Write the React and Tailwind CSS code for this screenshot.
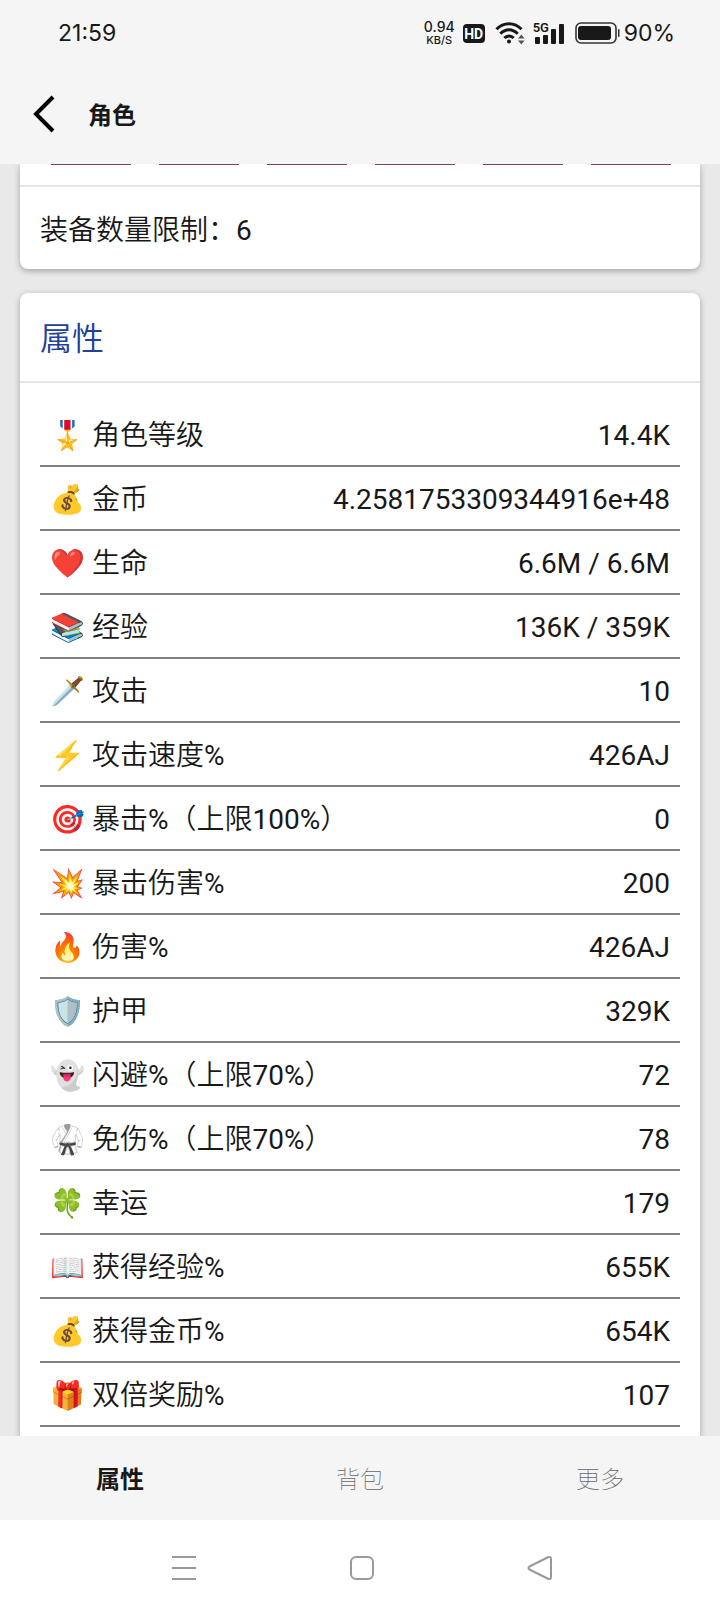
import React, { useState } from 'react';

const slots = [1, 2, 3, 4, 5, 6];

const stats = [
  { icon: '🎖️', label: '角色等级', value: '14.4K' },
  { icon: '💰', label: '金币', value: '4.2581753309344916e+48' },
  { icon: '❤️', label: '生命', value: '6.6M / 6.6M' },
  { icon: '📚', label: '经验', value: '136K / 359K' },
  { icon: '🗡️', label: '攻击', value: '10' },
  { icon: '⚡', label: '攻击速度%', value: '426AJ' },
  { icon: '🎯', label: '暴击%（上限100%）', value: '0' },
  { icon: '💥', label: '暴击伤害%', value: '200' },
  { icon: '🔥', label: '伤害%', value: '426AJ' },
  { icon: '🛡️', label: '护甲', value: '329K' },
  { icon: '👻', label: '闪避%（上限70%）', value: '72' },
  { icon: '🥋', label: '免伤%（上限70%）', value: '78' },
  { icon: '🍀', label: '幸运', value: '179' },
  { icon: '📖', label: '获得经验%', value: '655K' },
  { icon: '💰', label: '获得金币%', value: '654K' },
  { icon: '🎁', label: '双倍奖励%', value: '107' },
];

const tabs = ['属性', '背包', '更多'];

const WifiIcon = () => (
  <svg width="30" height="24" viewBox="0 0 30 24" fill="none" stroke="#181818" strokeWidth="3">
    <path d="M1.5 8.2C8.5 .8 19.5 .8 26.5 8.2" />
    <path d="M5.3 12.8C10.5 7.3 17.5 7.3 22.7 12.8" />
    <path d="M9.3 17C12 14.2 16 14.2 18.7 17" />
    <circle cx="14" cy="20.6" r="2" fill="#181818" stroke="none" />
    <path d="M23 17.5L26.3 13.5L29.6 17.5ZM23 19.5L26.3 23.5L29.6 19.5Z" fill="#555" stroke="none" />
  </svg>
);

const SignalIcon = () => (
  <span className="relative block">
    <svg width="32" height="24" viewBox="0 0 32 24" fill="#181818">
      <rect x="2" y="16" width="5" height="7" rx="1" />
      <rect x="10" y="14" width="5" height="9" rx="1" />
      <rect x="18" y="8" width="5" height="15" rx="1" />
      <rect x="26" y="3" width="5" height="20" rx="1" />
    </svg>
    <span className="absolute left-0 top-0 text-[13px] leading-[14px] font-semibold font-['Roboto',sans-serif]">5G</span>
  </span>
);

const BatteryIcon = () => (
  <svg width="45" height="22" viewBox="0 0 45 22" fill="none">
    <rect x="1" y="1" width="40" height="20" rx="5" stroke="#333" strokeWidth="1.6" />
    <rect x="3" y="4" width="33" height="14" rx="3" fill="#181818" />
    <rect x="43" y="7" width="1.5" height="8" rx="0.7" fill="#333" />
  </svg>
);

const StatusBar = () => (
  <div className="flex items-center justify-between h-16 pl-[58px] pr-[45px] pt-0.5 text-[23px] leading-7 text-[#181818] font-['Inter',sans-serif]">
    <span>21:59</span>
    <div className="flex items-center">
      <div className="flex flex-col items-center font-medium text-[14px] leading-[14px]">
        <span>0.94</span>
        <span className="text-[11px] leading-[12px]">KB/S</span>
      </div>
      <span className="ml-2 w-[22px] h-[19px] rounded bg-[#181818] text-white text-[14px] leading-[20px] font-bold text-center font-['Roboto',sans-serif]">HD</span>
      <span className="ml-2.5"><WifiIcon /></span>
      <span className="ml-2"><SignalIcon /></span>
      <span className="ml-2.5 mr-1"><BatteryIcon /></span>
      <span>90%</span>
    </div>
  </div>
);

const App = () => {
  const [tab, setTab] = useState('属性');

  return (
    <div className="flex flex-col min-h-screen bg-[#e9e9e9] text-[#181818] font-['Roboto','Noto_Sans_CJK_SC',sans-serif]">
      <header className="bg-[#f5f5f5]">
        <StatusBar />
        <div className="flex items-center h-[100px] pl-8">
          <button type="button" aria-label="返回" className="mr-8">
            <svg width="24" height="38" viewBox="0 0 24 38" fill="none" stroke="#000" strokeWidth="4">
              <path d="M21 2L4 19L21 36" />
            </svg>
          </button>
          <h1 className="pt-1 text-[24px] leading-8 font-bold">角色</h1>
        </div>
      </header>

      <main className="flex-1 px-5 overflow-hidden font-['Roboto','Noto_Sans_CJK_SC_DemiLight','Noto_Sans_CJK_SC',sans-serif]">
        <section className="bg-white rounded-b-lg shadow-[0_2px_6px_rgba(0,0,0,0.3)]">
          <div className="grid grid-cols-6 gap-7 h-[23px] pl-[31px] pr-[29px] border-b-2 border-[#e8e8e8]">
            {slots.map((slot) => (
              <div key={slot} className="h-px bg-[#7d4747]" />
            ))}
          </div>
          <p className="px-5 pt-6 pb-[18px] text-[28px] leading-10">装备数量限制：6</p>
        </section>

        <section className="mt-6 pb-[9px] bg-white rounded-t-lg shadow-[0_2px_6px_rgba(0,0,0,0.3)]">
          <h2 className="px-5 pt-[26px] pb-[22px] text-[32px] leading-10 text-[#20409a] border-b-2 border-[#e8e8e8]">属性</h2>
          <dl className="px-5 pt-5 text-[28px] leading-[42px]">
            {stats.map((s) => (
              <div key={s.label} className="flex items-center justify-between h-16 px-2.5 pt-1 border-b-2 border-[#808080]">
                <dt>{s.icon} {s.label}</dt>
                <dd>{s.value}</dd>
              </div>
            ))}
          </dl>
        </section>
      </main>

      <nav className="grid grid-cols-3 h-[84px] bg-[#f5f5f5] text-[24px]">
        {tabs.map((t) => (
          <button
            key={t}
            type="button"
            onClick={() => setTab(t)}
            className={t === tab ? 'pt-1 font-bold' : 'pt-1 font-thin text-[#666]'}
          >
            {t}
          </button>
        ))}
      </nav>

      <div className="flex items-center justify-center gap-[152px] h-[92px] pl-1 pt-1 bg-white">
        <button type="button" aria-label="最近任务">
          <svg width="26" height="26" viewBox="0 0 26 26" stroke="#999" strokeWidth="2">
            <path d="M1 2H25M1 13H25M1 24H25" />
          </svg>
        </button>
        <button type="button" aria-label="主页">
          <svg width="26" height="26" viewBox="0 0 26 26" fill="none" stroke="#999" strokeWidth="2">
            <rect x="2" y="2" width="22" height="22" rx="5" />
          </svg>
        </button>
        <button type="button" aria-label="返回上一页">
          <svg width="26" height="26" viewBox="0 0 26 26" fill="none" stroke="#999" strokeWidth="2" strokeLinejoin="round">
            <path d="M2.5 11.5L21.5 2Q24 1.5 24 4V22Q24 24.5 21.5 24L2.5 14.5Q0.5 13 2.5 11.5Z" />
          </svg>
        </button>
      </div>
    </div>
  );
};

export default App;
